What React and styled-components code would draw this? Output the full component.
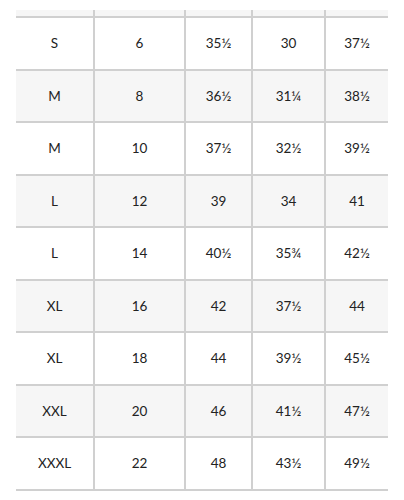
import React from "react";
import styled, { createGlobalStyle } from "styled-components";

const Global = createGlobalStyle`
  html, body { margin: 0; padding: 0; background: #fff; }
  body { font-family: Lato, "Open Sans", "Liberation Sans", sans-serif; }
`;

const Wrap = styled.div`
  padding: 10px 16px 0 16px;
`;

const Grid = styled.div`
  display: grid;
  grid-template-columns: 79px 91px 67px 73px 62px;
  width: 372px;
`;

const Cell = styled.div`
  height: ${(p) => (p.$header ? "8px" : "52.5px")};
  box-sizing: border-box;
  display: flex;
  align-items: center;
  justify-content: center;
  background: ${(p) => (p.$shade ? "#f6f6f6" : "#fff")};
  border-bottom: 2px solid #d0d0d0;
  border-right: ${(p) => (p.$last ? "none" : "2px solid #d0d0d0")};
  font-size: 13.5px;
  color: #222;
`;

const rows = [
  ["S", "6", "35½", "30", "37½"],
  ["M", "8", "36½", "31¼", "38½"],
  ["M", "10", "37½", "32½", "39½"],
  ["L", "12", "39", "34", "41"],
  ["L", "14", "40½", "35¾", "42½"],
  ["XL", "16", "42", "37½", "44"],
  ["XL", "18", "44", "39½", "45½"],
  ["XXL", "20", "46", "41½", "47½"],
  ["XXXL", "22", "48", "43½", "49½"],
];

export default function App() {
  return (
    <>
      <Global />
      <Wrap>
        <Grid>
          {[0, 1, 2, 3, 4].map((i) => (
            <Cell key={"h" + i} $header $shade $last={i === 4} />
          ))}
          {rows.map((r, ri) =>
            r.map((v, ci) => (
              <Cell key={ri + "-" + ci} $shade={ri % 2 === 1} $last={ci === 4}>
                {v}
              </Cell>
            ))
          )}
        </Grid>
      </Wrap>
    </>
  );
}
